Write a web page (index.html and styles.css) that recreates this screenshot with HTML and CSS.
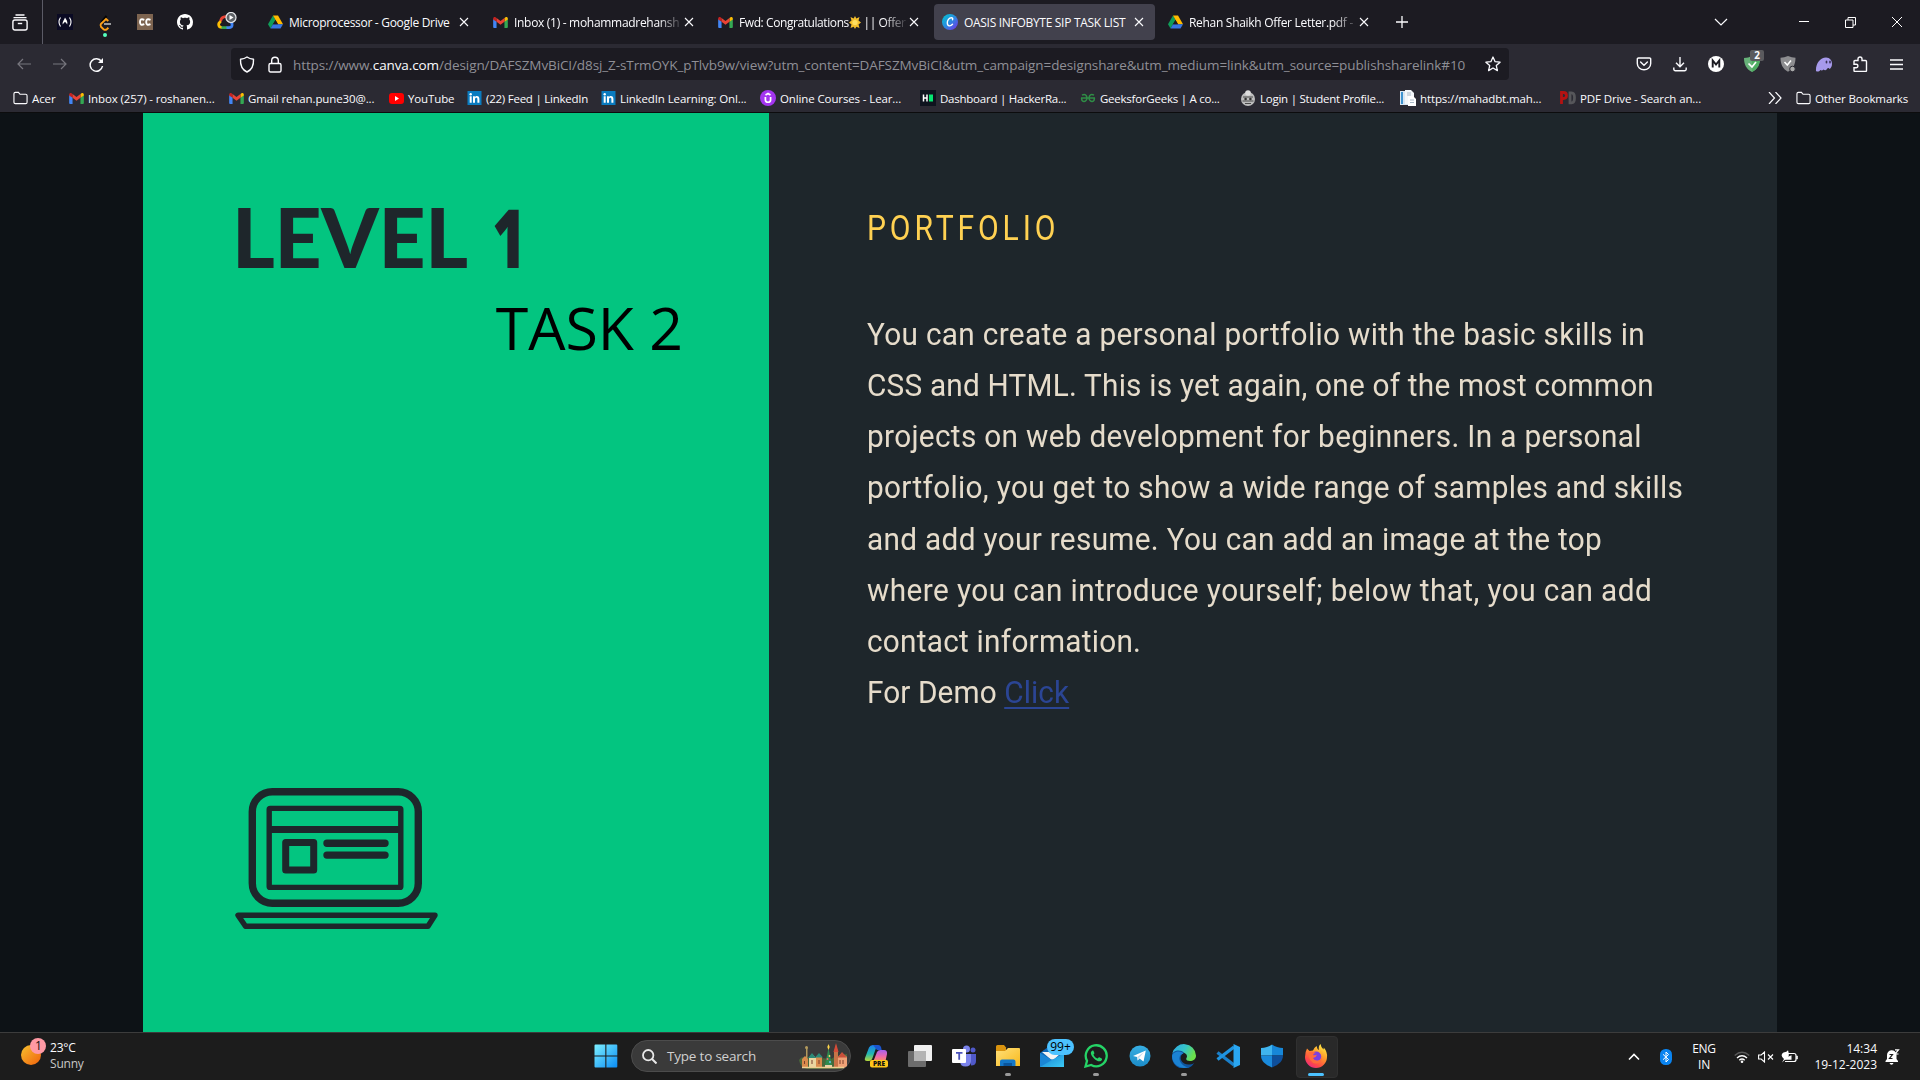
FILE: index.html
```html
<!DOCTYPE html>
<html lang="en">
<head>
<meta charset="utf-8">
<title>OASIS INFOBYTE SIP TASK LIST</title>
<link rel="stylesheet" href="styles.css">
</head>
<body>
<svg class="defs" aria-hidden="true">
  <defs>
    <linearGradient id="g-win" x1="0" y1="0" x2="1" y2="1"><stop offset="0" stop-color="#7df0ff"/><stop offset="1" stop-color="#0a8cf5"/></linearGradient>
    <linearGradient id="g-sun" x1="0" y1="0" x2="1" y2="1"><stop offset="0" stop-color="#f6c22f"/><stop offset="1" stop-color="#f0600c"/></linearGradient>
    <linearGradient id="g-canva" x1="0" y1="0" x2="1" y2="1"><stop offset="0" stop-color="#00c8d0"/><stop offset=".5" stop-color="#2a8ae0"/><stop offset="1" stop-color="#7d2ae8"/></linearGradient>
    <linearGradient id="g-edge" x1="0" y1="0" x2="1" y2=".4"><stop offset="0" stop-color="#2fa8e8"/><stop offset=".55" stop-color="#35c5c8"/><stop offset="1" stop-color="#6be04a"/></linearGradient>
    <linearGradient id="g-folder" x1="0" y1="0" x2="1" y2="1"><stop offset="0" stop-color="#ffe07a"/><stop offset="1" stop-color="#f8b91c"/></linearGradient>
    <linearGradient id="g-mail" x1="0" y1="0" x2="1" y2="1"><stop offset="0" stop-color="#1279d0"/><stop offset="1" stop-color="#3ccbf5"/></linearGradient>
    <linearGradient id="g-fox" x1=".8" y1="0" x2=".2" y2="1"><stop offset="0" stop-color="#fff044"/><stop offset=".4" stop-color="#ff9a2a"/><stop offset=".75" stop-color="#ff4a45"/><stop offset="1" stop-color="#e8258a"/></linearGradient>
    <linearGradient id="g-tg" x1="0" y1="0" x2="0" y2="1"><stop offset="0" stop-color="#37aee2"/><stop offset="1" stop-color="#1c8cc8"/></linearGradient>
    <linearGradient id="g-cop1" x1="0" y1="0" x2="0" y2="1"><stop offset="0" stop-color="#1c7df0"/><stop offset=".55" stop-color="#22b8b0"/><stop offset="1" stop-color="#b8d838"/></linearGradient>
    <linearGradient id="g-cop2" x1="0" y1="0" x2="0" y2="1"><stop offset="0" stop-color="#a560f0"/><stop offset=".6" stop-color="#f06aa8"/><stop offset="1" stop-color="#f89060"/></linearGradient>
    <symbol id="i-gmail" viewBox="0 0 16 12"><path fill="#4285f4" d="M0 2v9a1 1 0 0 0 1 1h2.700V5z"/><path fill="#34a853" d="M16 2v9a1 1 0 0 1-1 1h-2.700V5z"/><path fill="#fbbc04" d="M12.300 1.200V5.300L16 2.600V1.700C16 .3 14.300-.4 13.200.5z"/><path fill="#c5221f" d="M0 1.700v.9l3.700 2.700V1.200L2.800.5C1.700-.4 0 .3 0 1.700z"/><path fill="#ea4335" d="M3.700 1.100v4.200L8 8.500l4.300-3.200V1.100L8 4.400z"/></symbol>
    <symbol id="i-drive" viewBox="0 0 16 14"><path fill="#0f9d58" d="M5.300 0 0 9.300 2.700 14 8 4.700z"/><path fill="#ffba00" d="M5.300 0h5.400L16 9.300h-5.300z"/><path fill="#3777e3" d="M2.700 14h10.600L16 9.300H5.300z"/><path fill="#1c1b22" d="M8 4.800 5.400 9.300h5.200z"/></symbol>
    <symbol id="i-close" viewBox="0 0 10 10"><path d="M1 1l8 8M9 1l-8 8" fill="none" stroke="#fbfbfe" stroke-width="1.100"/></symbol>
    <symbol id="i-folder" viewBox="0 0 16 14"><path d="M1 2.500A1.500 1.500 0 0 1 2.500 1h3.300l1.700 2h6A1.500 1.500 0 0 1 15 4.500v7a1.500 1.500 0 0 1-1.500 1.500h-11A1.500 1.500 0 0 1 1 11.500z" fill="none" stroke="#fbfbfe" stroke-width="1.200"/></symbol>
    <symbol id="i-in" viewBox="0 0 14 14"><rect width="14" height="14" fill="#0a7bbf"/><path d="M2.200 5.300h2v6.500h-2zM5.500 5.300h1.900v.9c.5-.8 1.200-1.100 2-1.100 1.700 0 2.500 1 2.500 2.900v3.800h-2V8.300c0-1-.3-1.500-1.100-1.500s-1.300.5-1.300 1.600v3.400h-2z" fill="#fff"/><circle cx="3.200" cy="3.200" r="1.200" fill="#fff"/></symbol>
  </defs>
</svg>

<header class="browser">
  <div class="tabbar">
    <div class="view-btn"><svg width="16" height="17" viewBox="0 0 16 17" fill="none" stroke="#fbfbfe" stroke-width="1.400"><path d="M3.500 1h9M1.500 3.600h13"/><rect x=".9" y="6" width="14.200" height="10" rx="2"/><path d="M5.800 9.500h4.400"/></svg></div>
    <div class="pinned">
      <svg width="16" height="16" viewBox="0 0 16 16"><rect width="16" height="16" fill="#0a0a23"/><path d="M3.500 3.500Q.5 8 3.500 12.500M12.500 3.500Q15.500 8 12.500 12.500" fill="none" stroke="#fff" stroke-width="1.100"/><path d="M8 3.500c1.500 2.500 3 4 2.200 7-.8-1-1-2-2.200-2.500-1.200.5-1.400 1.500-2.200 2.500C5 8 7 6.500 8 3.500z" fill="#fff"/></svg>
      <svg width="16" height="24" viewBox="0 0 16 24"><path d="M9.500 2 4.500 8" fill="none" stroke="#050505" stroke-width="2"/><path d="M11.300 7 9 5 4 9.800q-1 1.500 0 3l2.500 2.400q1.800 1.300 3.300 0l1.600-1.500" fill="none" stroke="#ffa116" stroke-width="1.900"/><path d="M7 10h7" stroke="#b3b3b3" stroke-width="1.700"/><circle cx="8" cy="21" r="2" fill="#54ffbd"/></svg>
      <svg width="16" height="16" viewBox="0 0 16 16"><rect width="16" height="16" fill="#7d6450"/><path d="M7.300 5.800Q3 4 3 8t4.300 2.200M13.500 5.800Q9.200 4 9.200 8t4.300 2.200" fill="none" stroke="#fff" stroke-width="1.900"/></svg>
      <svg width="16" height="16" viewBox="0 0 16 16"><path fill="#fff" d="M8 0C3.580 0 0 3.580 0 8c0 3.540 2.290 6.530 5.470 7.590.4.070.55-.17.55-.38 0-.19-.01-.82-.01-1.490-2.010.37-2.530-.49-2.690-.94-.09-.23-.48-.94-.82-1.130-.28-.15-.68-.52-.01-.53.63-.01 1.080.58 1.230.82.720 1.210 1.870.87 2.330.66.070-.52.280-.87.510-1.070-1.780-.2-3.640-.89-3.640-3.950 0-.87.31-1.590.82-2.150-.08-.2-.36-1.020.08-2.120 0 0 .67-.21 2.200.82.640-.18 1.320-.27 2-.27s1.360.09 2 .27c1.530-1.040 2.200-.82 2.200-.82.440 1.100.16 1.920.08 2.120.51.560.82 1.270.82 2.150 0 3.070-1.870 3.750-3.650 3.950.29.25.54.73.54 1.480 0 1.070-.01 1.930-.01 2.200 0 .21.15.46.55.38A8.010 8.010 0 0 0 16 8c0-4.420-3.580-8-8-8z"/></svg>
      <svg class="cloud" width="20" height="18" viewBox="0 0 20 18"><g fill="none" stroke-width="2.700"><path d="M3.500 9.500C4 4.500 9 3.500 11 6" stroke="#ea4335"/><path d="M5 15.500C1 15.500.5 11 4 9.500" stroke="#fbbc04"/><path d="M4.500 15.600H10" stroke="#34a853"/><path d="M9.500 15.600h2.500c4 0 4-5 1-5.600" stroke="#4285f4"/></g><circle cx="14" cy="5.500" r="5" fill="#5f6368" stroke="#e8eaed" stroke-width="1.200"/><path d="M12.500 3v5l4-2.500z" fill="#fff"/></svg>
    </div>
    <div class="tabs">
      <div class="tab"><svg class="fav" width="15" height="14"><use href="#i-drive"/></svg><span class="label">Microprocessor - Google Drive</span><svg width="10" height="10"><use href="#i-close"/></svg></div>
      <div class="tab"><svg class="fav" width="15" height="11"><use href="#i-gmail"/></svg><span class="label fade">Inbox (1) - mohammadrehansh</span><svg width="10" height="10"><use href="#i-close"/></svg></div>
      <div class="tab"><svg class="fav" width="15" height="11"><use href="#i-gmail"/></svg><span class="label fade tight">Fwd: Congratulations<svg class="star" width="12" height="13" viewBox="0 0 12 13"><path d="M6 0l1.300 2.500L10.500 1 9.500 4.500l2.500 2-2.500 2 1 3.500-3.200-1.200L6 13l-1.300-2.200L1.500 12l1-3.500L0 6.500l2.500-2L1.500 1l3.200 1.500z" fill="#f5c02c"/><circle cx="6" cy="6.500" r="2.600" fill="#ffdf60"/></svg> || Offer</span><svg width="10" height="10"><use href="#i-close"/></svg></div>
      <div class="tab active"><svg class="fav" width="16" height="16" viewBox="0 0 16 16"><circle cx="8" cy="8" r="8" fill="url(#g-canva)"/><path d="M10.500 5.800c.6-1.200 0-2.100-1-2.100C7 3.700 5.200 6.500 5.300 9c.1 3.800 3.500 3.300 5.200 1.300" fill="none" stroke="#fff" stroke-width="1.400" stroke-linecap="round"/></svg><span class="label">OASIS INFOBYTE SIP TASK LIST</span><svg width="10" height="10"><use href="#i-close"/></svg></div>
      <div class="tab"><svg class="fav" width="15" height="14"><use href="#i-drive"/></svg><span class="label fade">Rehan Shaikh Offer Letter.pdf -</span><svg width="10" height="10"><use href="#i-close"/></svg></div>
    </div>
    <svg class="plus" width="12" height="12" viewBox="0 0 12 12"><path d="M6 0v12M0 6h12" stroke="#fbfbfe" stroke-width="1.300"/></svg>
    <div class="winctl">
      <svg width="14" height="8" viewBox="0 0 14 8"><path d="M1 1l6 6 6-6" fill="none" stroke="#fbfbfe" stroke-width="1.200"/></svg>
      <svg width="10" height="10" viewBox="0 0 10 10"><path d="M0 4.500h10" stroke="#fff"/></svg>
      <svg width="11" height="11" viewBox="0 0 11 11"><path d="M.5 3h7.500v7.500H.5zM3 3V.5h7.500V8H8" fill="none" stroke="#fff"/></svg>
      <svg width="10" height="10" viewBox="0 0 10 10"><path d="M0 0l10 10M10 0L0 10" stroke="#fff"/></svg>
    </div>
  </div>

  <div class="toolbar">
    <div class="nav">
      <svg width="14" height="12" viewBox="0 0 14 12" fill="none" stroke="#77767e" stroke-width="1.200"><path d="M14 6H1M6 1L1 6l5 5"/></svg>
      <svg width="14" height="12" viewBox="0 0 14 12" fill="none" stroke="#77767e" stroke-width="1.200"><path d="M0 6h13M8 1l5 5-5 5"/></svg>
      <svg width="15" height="15" viewBox="0 0 15 15" fill="none" stroke="#fbfbfe" stroke-width="1.500"><path d="M12.500 4.500a6.200 6.200 0 1 0 1 4.500"/><path d="M14 1v5H9z" fill="#fbfbfe" stroke="none"/></svg>
    </div>
    <div class="urlbar">
      <svg width="16" height="17" viewBox="0 0 16 17"><path d="M8 1c2 1.500 4 2 6.500 2.200.3 6-1.500 10.500-6.500 12.800C3 13.700 1.200 9.200 1.500 3.200 4 3 6 2.500 8 1z" fill="none" stroke="#fbfbfe" stroke-width="1.400" stroke-linejoin="round"/></svg>
      <svg width="14" height="17" viewBox="0 0 14 17"><rect x="1" y="7.500" width="12" height="8.500" rx="1.500" fill="none" stroke="#fbfbfe" stroke-width="1.400"/><path d="M3.700 7.500V4.500a3.300 3.300 0 0 1 6.600 0v3" fill="none" stroke="#fbfbfe" stroke-width="1.400"/></svg>
      <span class="url">https://www.<b>canva.com</b>/design/DAFSZMvBiCI/d8sj_Z-sTrmOYK_pTlvb9w/view?utm_content=DAFSZMvBiCI&amp;utm_campaign=designshare&amp;utm_medium=link&amp;utm_source=publishsharelink#10</span>
      <svg width="16" height="16" viewBox="0 0 16 16"><path d="M8 1l2.100 4.700 5 .5-3.800 3.400 1.100 5L8 12l-4.400 2.600 1.100-5L.9 6.200l5-.5z" fill="none" stroke="#fbfbfe" stroke-width="1.300" stroke-linejoin="round"/></svg>
    </div>
    <div class="ext">
      <svg width="16" height="14" viewBox="0 0 16 14" fill="none" stroke="#fbfbfe" stroke-width="1.400"><path d="M2.500 1h11a1.200 1.200 0 0 1 1.200 1.200V6.500a6.700 6.300 0 0 1-13.400 0V2.200A1.200 1.200 0 0 1 2.500 1z"/><path d="M4.600 5 8 8.200 11.400 5" stroke-linecap="round"/></svg>
      <svg width="14" height="16" viewBox="0 0 14 16" fill="none" stroke="#fbfbfe" stroke-width="1.400"><path d="M7 1v9.500M3 6.700l4 4 4-4M.8 11.500v1.700a1.500 1.500 0 0 0 1.500 1.500h9.400a1.500 1.500 0 0 0 1.500-1.500v-1.700"/></svg>
      <svg width="16" height="16" viewBox="0 0 16 16"><circle cx="8" cy="8" r="8" fill="#fff"/><path d="M4.700 11.500v-7L8 8.500l3.300-4v7" fill="none" stroke="#1c1b22" stroke-width="1.900"/></svg>
      <div class="badged"><svg width="16" height="16" viewBox="0 0 16 16"><path d="M8 0c2.500 1.300 5 1.800 8 2 0 6-2 11-8 14C2 13 0 8 0 2c3-.2 5.500-.7 8-2z" fill="#67b279"/><path d="M8 0c2.500 1.300 5 1.800 8 2 0 6-2 11-8 14z" fill="#4fae62"/><path d="M4.500 7.500 8 11l4-5" fill="none" stroke="#fff" stroke-width="1.700"/></svg><span class="badge">2</span></div>
      <svg width="16" height="16" viewBox="0 0 16 16"><path d="M8 0c2.500 1 5 1.500 7.500 1.700 0 6-2 11-7.500 14C2.500 12.700.5 7.700.5 1.700 3 1.500 5.500 1 8 0z" fill="#8d8d90"/><path d="M4.500 6l2.800 3L11 4.500" fill="none" stroke="#fff" stroke-width="1.500"/><circle cx="12.500" cy="13" r="2.800" fill="#aaa" stroke="#2b2a33"/></svg>
      <svg width="18" height="15" viewBox="0 0 18 15"><path d="M1 14C.5 7 5 .5 11 .5c4 0 6 3 6 6.500 0 2.500-1 4-2.500 5-.5-1.500-2-1.300-2.500 0-1 1.500-2.500 1.500-3.500.5-1 1.200-2.300 1.200-3.200.5-1 1.500-3 2.200-4.300 1z" fill="#a79aec"/><ellipse cx="11.500" cy="5" rx=".9" ry="1.500" fill="#3b3457"/><ellipse cx="15" cy="5" rx=".9" ry="1.500" fill="#3b3457"/></svg>
      <svg width="15" height="16" viewBox="0 0 15 16"><path d="M1 6.500V5.500a1 1 0 0 1 1-1h3V3a2 2 0 0 1 4 0v1.500h3.500a1 1 0 0 1 1 1v9a1 1 0 0 1-1 1H2a1 1 0 0 1-1-1v-2.700h2.200a1.700 1.700 0 0 0 0-3.500H1z" fill="none" stroke="#fbfbfe" stroke-width="1.400"/></svg>
      <svg width="13" height="11" viewBox="0 0 13 11"><path d="M0 1h13M0 5.500h13M0 10h13" stroke="#fbfbfe" stroke-width="1.400"/></svg>
    </div>
  </div>

  <div class="bookmarks">
    <div class="bm acer"><svg width="15" height="14"><use href="#i-folder"/></svg><span>Acer</span></div>
    <div class="bm"><svg width="15" height="11"><use href="#i-gmail"/></svg><span>Inbox (257) - roshanen...</span></div>
    <div class="bm"><svg width="15" height="11"><use href="#i-gmail"/></svg><span>Gmail rehan.pune30@...</span></div>
    <div class="bm youtube"><svg width="15" height="11" viewBox="0 0 15 11"><rect width="15" height="11" rx="3" fill="#f00"/><path d="M6 3v5l4-2.500z" fill="#fff"/></svg><span>YouTube</span></div>
    <div class="bm feed tight"><svg width="15" height="14"><use href="#i-in"/></svg><span>(22) Feed | LinkedIn</span></div>
    <div class="bm learning"><svg width="15" height="14"><use href="#i-in"/></svg><span>LinkedIn Learning: Onl...</span></div>
    <div class="bm"><svg width="16" height="16" viewBox="0 0 16 16"><circle cx="8" cy="8" r="8" fill="#a435f0"/><path d="M5.400 7v3c0 3 5.200 3 5.200 0V7M5.500 5 8 3.500 10.500 5" fill="none" stroke="#fff" stroke-width="1.700"/></svg><span>Online Courses - Lear...</span></div>
    <div class="bm tight"><svg width="16" height="16" viewBox="0 0 16 16"><rect width="16" height="16" fill="#0e141e"/><path d="M3.500 4.500v7M7 4.500v7M3.500 8H7" stroke="#fff" stroke-width="1.500"/><rect x="9" y="4.500" width="4" height="7" fill="#05e770"/></svg><span>Dashboard | HackerRa...</span></div>
    <div class="bm tight"><svg width="16" height="10" viewBox="0 0 16 10"><path d="M2 2.200Q5 .5 6.500 3q1 3-.5 4.500Q4 9.500 2 7.500L1.500 5M14 2.200Q11 .5 9.500 3q-1 3 .5 4.500 2 2 4 0L14.500 5M1 5h14" fill="none" stroke="#2f8d46" stroke-width="1.500"/></svg><span>GeeksforGeeks | A co...</span></div>
    <div class="bm tight"><svg width="16" height="16" viewBox="0 0 16 16"><circle cx="8" cy="9" r="7" fill="#bdbdbd"/><circle cx="8" cy="3" r="2.800" fill="#ddd"/><path d="M3 7h10M2.500 11h11M5 13.500h6" stroke="#4a4a4a"/><circle cx="5.600" cy="9" r="1.300" fill="#333"/><circle cx="10.400" cy="9" r="1.300" fill="#333"/></svg><span>Login | Student Profile...</span></div>
    <div class="bm"><svg width="16" height="16" viewBox="0 0 16 16"><path d="M0 1h11v14H0z" fill="#d9e6f2"/><path d="M1 2h2v12H1z" fill="#3f93cf"/><path d="M5 0h6l3 3v11H5z" fill="#f4f7fa"/><path d="M8 6h5l3 3v7H8z" fill="#fff"/><path d="M10 10h4M10 12.500h4M7 3h4M7 5h4" stroke="#a9b8c6"/></svg><span>https://mahadbt.mah...</span></div>
    <div class="bm"><svg width="16" height="14" viewBox="0 0 16 14"><path d="M1.500 13V1.500h2q3 0 3 3t-3 3h-2" fill="none" stroke="#b51212" stroke-width="2.800"/><path d="M10 1.800h1.500q3 0 3 5t-3 5H10z" fill="none" stroke="#56565a" stroke-width="2.800"/></svg><span>PDF Drive - Search an...</span></div>
    <svg class="more" width="14" height="12" viewBox="0 0 14 12"><path d="M1 0l5.500 6L1 12M7.500 0 13 6l-5.500 6" fill="none" stroke="#fbfbfe" stroke-width="1.200"/></svg>
    <div class="bm other"><svg width="15" height="14"><use href="#i-folder"/></svg><span>Other Bookmarks</span></div>
  </div>
</header>

<main class="stage">
  <section class="panel">
    <h1>LEVEL <span class="numeral">1</span></h1>
    <h2>TASK 2</h2>
    <svg class="laptop" width="204" height="143" viewBox="0 0 204 143" fill="none" stroke="#1e262b">
      <rect x="17.300" y="3.700" width="166" height="111.600" rx="20" stroke-width="7.400"/>
      <rect x="34.200" y="20.400" width="131.600" height="79" rx="1" stroke-width="5.400" stroke-linejoin="round"/>
      <path d="M34 41.500h132" stroke-width="7"/>
      <rect x="50.700" y="54.500" width="28" height="27.500" stroke-width="7" stroke-linejoin="round"/>
      <path d="M92 55.300h58M92 67.100h58" stroke-width="7.400" stroke-linecap="round"/>
      <path d="M3 127.200h197L193 138.300H10.500z" stroke-width="5.400" stroke-linejoin="round"/>
    </svg>
  </section>
  <section class="copy">
    <h3>PORTFOLIO</h3>
    <p>
      <span>You can create a personal portfolio with the basic skills in</span>
      <span>CSS and HTML. This is yet again, one of the most common</span>
      <span>projects on web development for beginners. In a personal</span>
      <span>portfolio, you get to show a wide range of samples and skills</span>
      <span>and add your resume. You can add an image at the top</span>
      <span>where you can introduce yourself; below that, you can add</span>
      <span>contact information.</span>
      <span>For Demo <a>Click</a></span>
    </p>
  </section>
</main>

<footer class="taskbar">
  <div class="weather">
    <svg width="26" height="30" viewBox="0 0 26 30"><circle cx="10" cy="18" r="10" fill="url(#g-sun)"/><circle cx="17" cy="9" r="8" fill="#ff99a4"/><text x="17.500" y="13" text-anchor="middle" class="wnum">1</text></svg>
    <div class="wtext"><span>23°C</span><span class="dim">Sunny</span></div>
  </div>
  <div class="apps">
    <svg class="start" width="24" height="24" viewBox="0 0 24 24"><path d="M.5 1.500a1 1 0 0 1 1-1h9.800v10.900H.5zM12.400.5h9.900a1 1 0 0 1 1 1v9.900H12.400zM.5 12.500h10.800v10.900H1.500a1 1 0 0 1-1-1zM12.400 12.500h10.900v9.900a1 1 0 0 1-1 1h-9.900z" fill="url(#g-win)"/></svg>
    <div class="search">
      <svg width="15" height="15" viewBox="0 0 15 15"><circle cx="6.200" cy="6.200" r="5.200" fill="none" stroke="#e8e8e8" stroke-width="1.800"/><path d="M10 10l4.500 4.500" stroke="#e8e8e8" stroke-width="2"/></svg>
      <span>Type to search</span>
      <svg class="city" width="50" height="26" viewBox="0 0 50 26">
        <path d="M1 17q3-5 8-2l4-1 20 2 5-3 11-2v12q-4 3-10 3H9q-7-2-8-9z" fill="#49673b"/>
        <path d="M8 25V5q1-3 1.500 0V25z" fill="#b39a5d"/><circle cx="8.500" cy="4.500" r="1.500" fill="#b39a5d"/>
        <path d="M4 24v-8l3-3 3 3v8zM18 24V14l3-3 3 3v10z" fill="#d98a4c"/><path d="M11 24v-9l3-4 4 4v9z" fill="#ead5a0"/><path d="M10 15l4-5 4 5zM17 14.500l4-4.500 4 4.500z" fill="#2c8a77"/>
        <path d="M36 24V9l2-7 2 7v15z" fill="#c87347"/><path d="M35.500 9 38 0l2.500 9z" fill="#d64b38"/><path d="M40 25V14l4-4 5 4v9l-3 2z" fill="#efa176"/><path d="M39.500 14.500 44 9l5 5.500z" fill="#c9503a"/>
        <path d="M27 22l3.500-17L34 22z" fill="#2e8b4f"/><path d="M30.500 1l1.200 3-1.200 3-1.200-3z" fill="#ffd54a"/><path d="M27 22h7v2.500h-7z" fill="#e8d0a8"/><circle cx="29.500" cy="16" r=".9" fill="#ff6262"/><circle cx="31.500" cy="13" r=".9" fill="#ffe36d"/><circle cx="32" cy="19" r=".9" fill="#70c5ff"/>
        <path d="M42 17v4M45 17v4M14 17v4M21 17v4M6.500 18v3" stroke="#7a3f2d"/><path d="M4 24.500h42" stroke="#eecf91" stroke-width="1.300"/>
      </svg>
    </div>
    <div class="app"><svg width="24" height="24" viewBox="0 0 24 24"><path d="M1 14 5 3.500Q6 1 9 1h6q-2 .5-3 3L8.500 14Q7.500 17 5 17H3Q0 17 1 14z" fill="url(#g-cop1)"/><path d="M9 1h5q2.500 0 3 2l.7 3H13z" fill="#1b55cf"/><path d="M9.500 17 13 8q1-2 3.500-2H20q3.500 0 3 4l-1.500 7z" fill="url(#g-cop2)"/><rect x="6" y="16" width="18" height="7.500" rx="2" fill="#ffc61a"/><text x="15" y="22.300" text-anchor="middle" class="pre">PRE</text></svg></div>
    <div class="app"><svg width="24" height="24" viewBox="0 0 24 24"><rect x="6" y="1" width="18" height="16" rx="1" fill="#f0f0f0"/><rect x="0" y="7" width="18" height="16" rx="1" fill="#6c6c6c"/><rect x="6" y="7" width="12" height="10" fill="#b4b4b4"/></svg></div>
    <div class="app"><svg width="24" height="24" viewBox="0 0 24 24"><circle cx="14.500" cy="5" r="3.500" fill="#7b83eb"/><circle cx="21" cy="6" r="2.500" fill="#5059c9"/><path d="M17 10h7v7q0 4.500-5 4.500z" fill="#5059c9"/><path d="M9 10h10v7q0 5.500-5.500 5.500T8 17z" fill="#7b83eb"/><rect x="0" y="5" width="14" height="14" rx="1" fill="#fff"/><path d="M4 8.800h6.500M7.200 8.800v7" stroke="#4b53bc" stroke-width="1.800"/></svg></div>
    <div class="app run"><svg width="24" height="24" viewBox="0 0 24 24"><path d="M0 2.500A1.500 1.500 0 0 1 1.500 1H8l2.500 3H10v5H0z" fill="#d9930e"/><path d="M0 7h9l3-3h11a1 1 0 0 1 1 1v17H0z" fill="url(#g-folder)"/><path d="M4 22v-4.500A2 2 0 0 1 6 15.500h11.500a2 2 0 0 1 2 2V22z" fill="#1478c8"/><path d="M7.500 19h8.500v3H7.500z" fill="#0a559c"/></svg></div>
    <div class="app"><svg width="24" height="24" viewBox="0 0 24 24"><path d="M0 9 12 0l12 9v14H0z" fill="#0f66b4"/><path d="M2 8h20l-8 7.500h-3z" fill="#f4f4f4"/><path d="M0 9l24 14H0z" fill="#1a86d6"/><path d="M24 9 0 23h24z" fill="url(#g-mail)"/></svg><span class="count">99+</span></div>
    <div class="app run"><svg width="24" height="24" viewBox="0 0 24 24"><path d="M1.500 22.500 3 16.800A10.500 10.500 0 1 1 7.200 21z" fill="none" stroke="#25d366" stroke-width="2.300"/><path d="M8.500 6.500c-3 1.500-1.500 5 1.500 8s6.500 4 8 1.300c.4-1-.3-1.500-2.700-2.500-.7-.3-1.200 1.300-1.800 1.200-1.500-.5-3.300-2-4-3.800 0-.5 1.200-1 .8-2-.7-1.900-1-2.400-1.800-2.200z" fill="#25d366"/></svg></div>
    <div class="app"><svg width="22" height="22" viewBox="0 0 22 22"><circle cx="11" cy="11" r="10.500" fill="url(#g-tg)"/><path d="M4 11 16.800 5.500 14.500 16.500l-4-3-1.800 2-.6-3.500z" fill="#fff"/><path d="M8.200 12 15 7l-5 6-1.300 2.500z" fill="#c5dcec"/></svg></div>
    <div class="app run"><svg width="24" height="24" viewBox="0 0 24 24"><path d="M.3 9.500A12 12 0 0 1 24 11.500c0 4-3 5.500-6 5.500s-4.500-1-3.500-3c1.500-2.500-.5-5.500-4.500-5.500C5 8.500 1 9 .3 9.500z" fill="url(#g-edge)"/><path d="M0 12c0-6 9-7 12-3C9.500 9.500 8 13 9 16c1.500 3.500 5.500 5 9 4.500 2 0 3-.8 4.300-1.500A12 12 0 0 1 0 12z" fill="#0f559f"/><path d="M0 12c1-5 9-6 11.500-2.500C8.500 10 7 13 7.500 15.500c1 4 4 7 8.500 7.800A12 12 0 0 1 0 12z" fill="#1b82d2"/></svg></div>
    <div class="app"><svg width="24" height="24" viewBox="0 0 24 24"><path d="M1.500 8.500 18 21" stroke="#1a7fc9" stroke-width="3.400"/><path d="M1.500 15.500 18 3" stroke="#1f94e0" stroke-width="3.400"/><path d="M17.500 0 24 3v18l-6.500 3z" fill="#2aa7f2"/></svg></div>
    <div class="app"><svg width="24" height="24" viewBox="0 0 24 24"><path d="M12 .5C9 2.800 5 4 1 4v7.500h11z" fill="#40b5ee"/><path d="M12 .5C15 2.800 19 4 23 4v7.500H12z" fill="#1787d8"/><path d="M1 11.500h11v12C5 20.500 1 17 1 11.500z" fill="#1a8adb"/><path d="M23 11.500H12v12c7-3 11-6.500 11-12z" fill="#0e4f9b"/></svg></div>
    <div class="app run current"><svg width="24" height="24" viewBox="0 0 24 24"><path d="M3 4.500 5.500 7 9 6.500q1-3 3.500-4.500.5 3 2.500 4-1-3.500 1.500-6 .5 3.500 3 5.500l.3-2Q23.500 8 23 13a11 11 0 0 1-22 0Q1 8 3 4.500z" fill="url(#g-fox)"/><circle cx="12.200" cy="12.500" r="5" fill="#7a3fe0"/><path d="M4.500 8q4-1.500 7.500 1-2.500.2-3 2 2.500.5 4-.3-1 3-4 3.300 1.500 3 5 2.500 3-.5 3.500-3.500Q18 19 12 19.500 4.500 19 4.500 8z" fill="#ff6a3d"/></svg></div>
  </div>
  <div class="tray">
    <svg width="12" height="8" viewBox="0 0 12 8"><path d="M1 6.500 6 1.500l5 5" fill="none" stroke="#fff" stroke-width="1.600"/></svg>
    <svg class="bt" width="12" height="16" viewBox="0 0 12 16"><rect width="12" height="16" rx="5.500" fill="#0a84f0"/><path d="M3 5.300 8.500 10.500 6 13V3l2.500 2.500L3 10.700" fill="none" stroke="#fff"/></svg>
    <div class="lang"><span>ENG</span><span>IN</span></div>
    <svg class="wifi" width="16" height="12" viewBox="0 0 16 12"><path d="M.7 4.500Q8-2 15.300 4.500" fill="none" stroke="#5a5a5a" stroke-width="1.400"/><path d="M3 7q5-4.500 10 0M5.300 9.200q2.700-2.400 5.400 0" fill="none" stroke="#fff" stroke-width="1.400"/><circle cx="8" cy="10.700" r="1.300" fill="#fff"/></svg>
    <svg class="mute" width="16" height="12" viewBox="0 0 16 12"><path d="M.6 4h2.600L6.500 1v10L3.200 8H.6z" fill="none" stroke="#fff" stroke-width="1.100"/><path d="M10 3.500l5 5M15 3.500l-5 5" stroke="#fff" stroke-width="1.100"/></svg>
    <svg class="batt" width="17" height="14" viewBox="0 0 17 14"><path d="M6 3.500h7a2 2 0 0 1 2 2v4a2 2 0 0 1-2 2H4" fill="none" stroke="#fff" stroke-width="1.200"/><path d="M15.500 6v3h1V6z" fill="#fff" stroke="#fff" stroke-width=".6"/><path d="M10.500 5.300v4.500H4V8z" fill="#fff"/><path d="M1 12.500 3 9Q-1.500 5 2.500 2.500 6 2 7 .3q2.500 7-2.500 9z" fill="#fff"/></svg>
    <div class="clock"><span>14:34</span><span>19-12-2023</span></div>
    <svg class="bell" width="15" height="16" viewBox="0 0 15 16"><path d="M2 10V6.500a4.500 4.500 0 0 1 9.500-1V10l1.500 2v1H.5v-1z" fill="#fff"/><path d="M4.500 14h4q-.5 1.700-2 1.700t-2-1.700z" fill="#fff"/><path d="M4.500 5.500h3l-3 4h3" fill="none" stroke="#1c1c1c" stroke-width="1.200"/><path d="M10 .8h3.500L10 5h3.500" fill="none" stroke="#fff" stroke-width="1.200"/></svg>
  </div>
</footer>
</body>
</html>
```
FILE: styles.css
```css
* { box-sizing: border-box; }
html, body { margin: 0; height: 100%; overflow: hidden; }
body {
  width: 1920px;
  height: 1080px;
  display: flex;
  flex-direction: column;
  background: #0d1216;
  color: #fbfbfe;
  font: 12px "Open Sans", "Noto Sans", sans-serif;
}
svg { display: block; flex: none; }
.defs { position: absolute; width: 0; height: 0; }

/* Browser chrome */
.browser { flex: none; height: 113px; background: #2b2a33; border-bottom: 1px solid #0c0c0d; }
.tabbar { height: 44px; background: #1c1b22; display: flex; align-items: center; }
.view-btn { width: 43px; height: 44px; padding: 14px 0 0 12px; border-right: 1px solid #5b5b66; }
.pinned { display: flex; align-items: flex-start; gap: 24px; width: 216px; height: 44px; padding: 14px 0 0 14px; }
.cloud { margin-top: -2px; }
.tabs { display: flex; gap: 4px; }
.tab { width: 221px; height: 36px; padding: 0 11px 0 9px; border-radius: 4px; display: flex; align-items: center; }
.tab.active { background: #42414d; padding-left: 8px; }
.fav { margin-right: 6px; }
.label { flex: 1; white-space: nowrap; font-size: 12px; letter-spacing: -.3px; }
.label.tight { letter-spacing: -.42px; }
.fade { -webkit-mask-image: linear-gradient(to right, #000 85%, transparent); mask-image: linear-gradient(to right, #000 85%, transparent); }
.star { display: inline-block; vertical-align: -2px; }
.plus { margin-left: 16px; }
.winctl { margin-left: auto; display: flex; align-items: center; padding-right: 18px; }
.winctl svg:nth-child(2) { margin-left: 71px; }
.winctl svg:nth-child(n+3) { margin-left: 36px; }

.toolbar { height: 40px; display: flex; align-items: center; }
.nav { width: 231px; padding-left: 17px; display: flex; align-items: center; gap: 22px; }
.urlbar { width: 1278px; height: 32px; background: #1c1b22; border-radius: 4px; display: flex; align-items: center; padding: 0 8px; }
.urlbar svg:nth-child(2) { margin-left: 13px; }
.url { flex: 1; margin-left: 11px; padding-top: 1px; font-size: 13.5px; letter-spacing: -.1px; color: #8f8f96; white-space: nowrap; }
.url b { font-weight: 400; color: #fbfbfe; }
.ext { flex: 1; display: grid; grid-template-columns: repeat(8, 36px); justify-content: end; justify-items: center; align-items: center; padding-right: 6px; }
.badged { position: relative; }
.badge { position: absolute; left: 6px; top: -6px; width: 14px; height: 11px; border-radius: 2px; background: #5a5a5e; font: 700 10px/11px "Open Sans", sans-serif; text-align: center; }

.bookmarks { height: 28px; display: flex; align-items: center; padding-left: 13px; font-size: 11.5px; letter-spacing: -.12px; }
.bm { flex: none; width: 160px; display: flex; align-items: center; gap: 4px; white-space: nowrap; }
.bm.tight { letter-spacing: -.24px; }
.bm.acer { width: 56px; }
.bm.youtube { width: 78px; }
.bm.feed { width: 134px; }
.bm.learning { width: 159px; }
.bm.other { width: 112px; margin-left: 14px; }
.more { margin-left: 48px; }

/* Slide */
.stage { flex: 1; display: flex; margin-left: 143px; width: 1634px; background: #1e262b; overflow: hidden; }
.panel { flex: none; width: 626px; background: #03c580; padding: 78px 86px 101px 92px; display: flex; flex-direction: column; }
h1, h2, h3, p { margin: 0; }
h1 { margin-left: -3px; font: 900 82px/90px Lato, sans-serif; letter-spacing: -.3px; color: #1e262b; white-space: nowrap; }
.numeral { display: inline-block; margin-left: -7px; font: 800 82px/90px "Open Sans", sans-serif; transform: scaleX(.7); transform-origin: right; }
h2 { padding-top: 6px; font: 400 59px/80px "Open Sans", sans-serif; color: #000; text-align: right; }
.laptop { margin-top: auto; }
.copy { padding: 91px 0 0 98px; }
h3 { font: 400 35px/50px Roboto, sans-serif; letter-spacing: 4.5px; color: #ffd152; transform: scaleX(.86); transform-origin: left; }
p { margin-top: 55px; font: 400 32px/51.14px Roboto, sans-serif; letter-spacing: .34px; color: #e6dccb; white-space: nowrap; transform: scaleX(.93); transform-origin: left; }
p span { display: block; }
p span:nth-child(2) { letter-spacing: .23px; }
p span:nth-child(6) { letter-spacing: .45px; }
p span:nth-child(7) { letter-spacing: .27px; }
p span:nth-child(8) { letter-spacing: .1px; }
a { color: #2b4594; text-decoration: underline; text-decoration-thickness: 2px; text-underline-offset: 4px; }

/* Taskbar */
.taskbar { flex: none; height: 48px; background: #1c1c1c; border-top: 1px solid #3c3c3c; display: flex; }
.weather { width: 594px; padding: 4px 0 0 21px; display: flex; gap: 3px; }
.wnum { font: 12px "Open Sans", sans-serif; fill: #111; }
.wtext { display: flex; flex-direction: column; padding-top: 3px; font-size: 12px; line-height: 16px; letter-spacing: -.2px; }
.dim { color: #c8c8c8; }
.apps { display: flex; align-items: center; padding-bottom: 1px; }
.search { width: 220px; height: 32px; margin: 0 3px 0 13px; padding: 0 2px 0 10px; border: 1px solid #4c4c4c; border-radius: 16px; background: #3a3a3a; color: #d0d0d0; display: flex; align-items: center; gap: 10px; font-size: 13.5px; letter-spacing: -.2px; white-space: nowrap; }
.city { margin-left: auto; }
.app { position: relative; width: 44px; height: 47px; display: flex; align-items: center; justify-content: center; }
.count { position: absolute; left: 17px; top: 6px; width: 27px; height: 16px; border-radius: 8px; background: #4cc2ff; color: #000; font-size: 12px; line-height: 15px; text-align: center; }
.run::after { content: ""; position: absolute; left: 19px; bottom: 4px; width: 6px; height: 3px; border-radius: 2px; background: #9a9a9a; }
.current::before { content: ""; position: absolute; left: 2px; top: 3px; width: 40px; height: 40px; border: 1px solid #303030; border-radius: 4px; background: #292929; }
.current svg { position: relative; }
.current.run::after { left: 14px; width: 16px; background: #4cc2ff; }
.pre { font: 800 6.5px "Open Sans", sans-serif; fill: #111; }
.tray { margin-left: auto; padding-right: 20px; display: flex; align-items: center; font-size: 12px; line-height: 16px; }
.bt { margin-left: 20px; }
.lang { width: 28px; margin-left: 18px; display: flex; flex-direction: column; align-items: center; letter-spacing: -.3px; }
.wifi { margin-left: 16px; }
.mute, .bell { margin-left: 8px; }
.batt { margin-left: 7px; }
.clock { width: 79px; display: flex; flex-direction: column; align-items: flex-end; letter-spacing: 0; }
```
